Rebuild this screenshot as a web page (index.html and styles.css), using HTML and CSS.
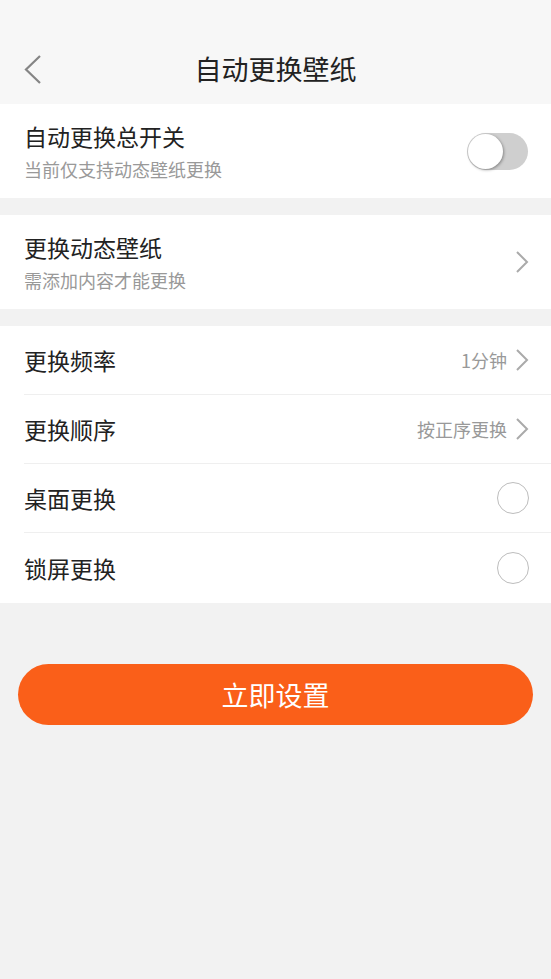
FILE: index.html
```html
<!DOCTYPE html>
<html lang="zh-CN">
<head>
    <meta charset="UTF-8">
    <meta name="viewport" content="width=device-width, initial-scale=1.0">
    <title>自动更换壁纸</title>
    <link rel="stylesheet" href="styles.css">
</head>
<body>
    <div class="header">
        <svg class="back" width="20" height="32" viewBox="0 0 20 32">
            <path d="M17 2 L3 15.5 L17 29" fill="none" stroke="#858585" stroke-width="2.2"/>
        </svg>
        <h1>自动更换壁纸</h1>
    </div>

    <div class="group">
        <div class="item tall">
            <div class="texts">
                <div class="title">自动更换总开关</div>
                <div class="sub">当前仅支持动态壁纸更换</div>
            </div>
            <div class="switch"><span class="knob"></span></div>
        </div>
    </div>

    <div class="group">
        <div class="item tall">
            <div class="texts">
                <div class="title">更换动态壁纸</div>
                <div class="sub">需添加内容才能更换</div>
            </div>
            <svg class="arrow" width="14" height="24" viewBox="0 0 14 24">
                <path d="M2 2 L12 12 L2 22" fill="none" stroke="#aaa" stroke-width="2"/>
            </svg>
        </div>
    </div>

    <div class="group">
        <div class="item">
            <div class="title">更换频率</div>
            <div class="right">
                <span class="value">1分钟</span>
                <svg class="arrow" width="14" height="24" viewBox="0 0 14 24">
                    <path d="M2 2 L12 12 L2 22" fill="none" stroke="#aaa" stroke-width="2"/>
                </svg>
            </div>
        </div>
        <div class="item">
            <div class="title">更换顺序</div>
            <div class="right">
                <span class="value">按正序更换</span>
                <svg class="arrow" width="14" height="24" viewBox="0 0 14 24">
                    <path d="M2 2 L12 12 L2 22" fill="none" stroke="#aaa" stroke-width="2"/>
                </svg>
            </div>
        </div>
        <div class="item">
            <div class="title">桌面更换</div>
            <span class="radio"></span>
        </div>
        <div class="item">
            <div class="title">锁屏更换</div>
            <span class="radio"></span>
        </div>
    </div>

    <div class="action">
        <button class="btn">立即设置</button>
    </div>
</body>
</html>
```

FILE: styles.css
```css
*{
    padding: 0;
    margin: 0;
    box-sizing: border-box;
}

body{
    background-color: #f2f2f2;
    font-family: "Noto Sans CJK SC", "Noto Sans", sans-serif;
    color: #222;
}

.header{
    height: 104px;
    background-color: #f7f7f7;
    display: flex;
    align-items: center;
    justify-content: center;
    padding-top: 32px;
    position: relative;
}

.header h1{
    font-size: 27px;
    font-weight: 400;
    color: #222;
}

.back{
    position: absolute;
    left: 23px;
    top: 54px;
}

.group{
    background-color: #fff;
    margin-bottom: 17px;
}

.item{
    height: 69px;
    margin-left: 24px;
    padding-right: 23px;
    display: flex;
    align-items: center;
    justify-content: space-between;
    border-bottom: 1px solid #efefef;
}

.item:last-child{
    border-bottom: none;
    height: 70px;
}

.item.tall{
    height: 94px;
}

.title{
    font-size: 23px;
    line-height: 32px;
}

.sub{
    font-size: 18px;
    color: #999;
    margin-top: 4px;
    line-height: 26px;
}

.texts{
    padding-bottom: 1px;
}

.right{
    display: flex;
    align-items: center;
    gap: 8px;
}

.value{
    font-size: 18px;
    color: #999;
}

.arrow{
    margin-right: -1px;
}

.switch{
    width: 61px;
    height: 37px;
    border-radius: 19px;
    background-color: #cfcfcf;
    position: relative;
}

.knob{
    position: absolute;
    left: 1px;
    top: 1px;
    width: 35px;
    height: 35px;
    border-radius: 50%;
    background-color: #fff;
    box-shadow: 1px 1px 3px rgba(0, 0, 0, 0.35);
}

.radio{
    width: 32px;
    height: 32px;
    border-radius: 50%;
    border: 1.5px solid #bdbdbd;
    margin-right: -1px;
}

.action{
    padding: 44px 18px 0 18px;
}

.btn{
    width: 100%;
    height: 61px;
    border: none;
    border-radius: 31px;
    background-color: #fa5f19;
    color: #fff;
    font-family: "Noto Sans CJK SC", sans-serif;
    font-size: 27px;
}
```
